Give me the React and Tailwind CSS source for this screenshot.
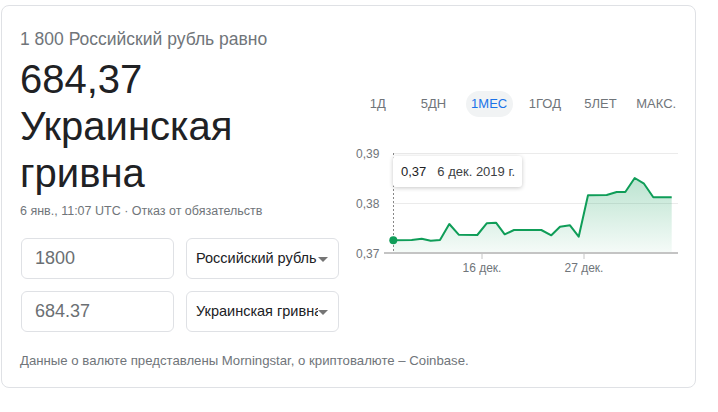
import React from "react";

const tabs = ["1Д", "5ДН", "1МЕС", "1ГОД", "5ЛЕТ", "МАКС."];

const pts = [
  [393.3, 240.3], [411.7, 240], [421.7, 238.7], [430.7, 240.7], [440, 240],
  [449.3, 224], [458.7, 234.7], [477.3, 235], [486.7, 223.3], [496, 222.7],
  [504.7, 234.3], [514, 230], [541.3, 230], [551.3, 235.3], [560, 226.7],
  [570, 225.3], [578.7, 236.7], [588, 195.3], [606.7, 195], [616.7, 192],
  [625.3, 192], [634.7, 178], [644, 183.7], [653.3, 197.3], [671.7, 197.3],
];

function Chart() {
  const line = pts.map((p, i) => (i ? "L" : "M") + p[0] + " " + p[1]).join(" ");
  const area = line + " L671.7 253 L393.3 253 Z";
  return (
    <div className="relative h-[165px]">
      <svg width="350" height="165" viewBox="345 117 350 165" className="block">
        <defs>
          <linearGradient id="fill" x1="0" y1="0" x2="0" y2="1">
            <stop offset="0%" stopColor="#0f9d58" stopOpacity="0.28" />
            <stop offset="100%" stopColor="#0f9d58" stopOpacity="0.04" />
          </linearGradient>
        </defs>
        <g fontFamily="Liberation Sans, Arial, sans-serif" fontSize="12" fill="#70757a">
          <text x="356" y="158">0,39</text>
          <text x="356" y="208">0,38</text>
          <text x="356" y="258">0,37</text>
          <text x="482" y="272" textAnchor="middle">16 дек.</text>
          <text x="584" y="272" textAnchor="middle">27 дек.</text>
        </g>
        <line x1="393" y1="153.5" x2="678" y2="153.5" stroke="#ebebeb" />
        <line x1="393" y1="203.5" x2="678" y2="203.5" stroke="#ebebeb" />
        <path d={area} fill="url(#fill)" />
        <line x1="393.5" y1="153" x2="393.5" y2="253" stroke="#888" strokeDasharray="2 2" />
        <line x1="384" y1="253" x2="678" y2="253" stroke="#c4c4c4" strokeWidth="2" />
        <line x1="482" y1="253" x2="482" y2="259" stroke="#c4c4c4" />
        <line x1="584" y1="253" x2="584" y2="259" stroke="#c4c4c4" />
        <path d={line} fill="none" stroke="#0f9d58" strokeWidth="2" strokeLinejoin="round" />
        <circle cx="393.3" cy="240.3" r="4" fill="#0f9d58" />
      </svg>
      <div className="absolute left-[48px] top-[39px] w-[129px] h-[31px] bg-white rounded-[3px] shadow-[0_1px_4px_rgba(0,0,0,0.22)] flex items-center pl-[8px] text-[13px]">
        <span className="text-[#202124]">0,37</span>
        <span className="ml-[11px] text-[#3c4043]">6 дек. 2019 г.</span>
      </div>
    </div>
  );
}

function Select({ label }) {
  return (
    <div className="relative w-[153px] h-[41px] border border-[#dfe1e5] rounded-[6px] flex items-center pl-[9px] pr-[20px]">
      <span className="text-[14.5px] text-[#202124] whitespace-nowrap overflow-hidden">{label}</span>
      <span className="absolute right-[10px] top-[18px] w-0 h-0 border-l-[5px] border-r-[5px] border-t-[5px] border-l-transparent border-r-transparent border-t-[#757575]" />
    </div>
  );
}

function Field({ value }) {
  return (
    <div className="w-[153px] h-[41px] border border-[#dfe1e5] rounded-[6px] flex items-center pl-[13px] text-[18px] text-[#6b6f73]">
      {value}
    </div>
  );
}

export default function App() {
  return (
    <div className="w-[718px] h-[412px] bg-white pl-[1px] pt-[5px]" style={{ fontFamily: "'Liberation Sans', Arial, sans-serif" }}>
      <div className="w-[695px] h-[383px] border border-[#dfe1e5] rounded-[8px] flex flex-col">
        <div className="flex">
          <div className="w-[343px] pl-[18px] pt-[23px]">
            <div className="text-[17.5px] leading-[20px] text-[#70757a]">1 800 Российский рубль равно</div>
            <div className="mt-[7px] text-[40px] leading-[47px] text-[#202124]">
              684,37
              <br />
              Украинская
              <br />
              гривна
            </div>
            <div className="mt-[6px] text-[12.5px] leading-[16px] text-[#70757a]">6 янв., 11:07 UTC · Отказ от обязательств</div>
            <div className="mt-[19px] ml-px flex flex-col gap-[12px]">
              <div className="flex gap-[12px]">
                <Field value="1800" />
                <Select label="Российский рубль" />
              </div>
              <div className="flex gap-[12px]">
                <Field value="684.37" />
                <Select label="Украинская гривна" />
              </div>
            </div>
          </div>
          <div className="flex-1 pt-[85px]">
            <div className="flex w-[334px] ml-[5px] h-[26px]">
              {tabs.map((t) => (
                <div key={t} className="flex-1 flex justify-center">
                  <div
                    className={
                      t === "1МЕС"
                        ? "h-[26px] w-[47px] rounded-full bg-[#f1f3f4] flex items-center justify-center text-[13px] text-[#1a73e8]"
                        : "h-[26px] flex items-center justify-center text-[13px] text-[#70757a]"
                    }
                  >
                    {t}
                  </div>
                </div>
              ))}
            </div>
            <Chart />
          </div>
        </div>
        <div className="pl-[18px] mt-[21px] text-[13.2px] leading-[16px] text-[#70757a]">
          Данные о валюте представлены Morningstar, о криптовалюте – Coinbase.
        </div>
      </div>
    </div>
  );
}
